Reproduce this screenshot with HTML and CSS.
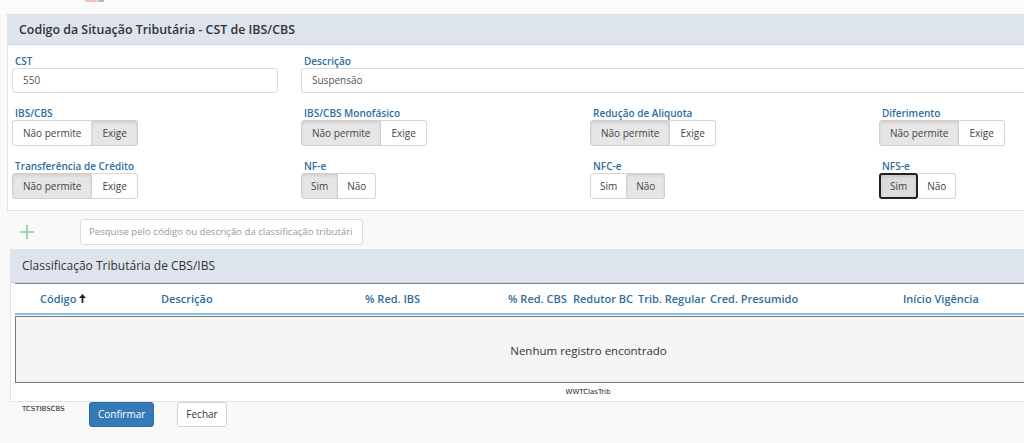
FILE: index.html
```html
<!DOCTYPE html>
<html lang="pt-BR">

<head>
    <meta charset="UTF-8">
    <title>CST de IBS/CBS</title>
    <link rel="stylesheet" href="styles.css">
</head>

<body>
    <div class="topbar">
        <span class="logo-red"></span><span class="logo-blue"></span>
    </div>

    <!-- Painel CST -->
    <div class="panel">
        <div class="panel-heading">Codigo da Situação Tributária - CST de IBS/CBS</div>
        <div class="panel-body">
            <div class="form-grid">
                <div class="field">
                    <label>CST</label>
                    <div class="input">550</div>
                </div>
                <div class="field span3">
                    <label>Descrição</label>
                    <div class="input">Suspensão</div>
                </div>

                <div class="field">
                    <label>IBS/CBS</label>
                    <div class="btn-group">
                        <span class="opt">Não permite</span><span class="opt active">Exige</span>
                    </div>
                </div>
                <div class="field">
                    <label>IBS/CBS Monofásico</label>
                    <div class="btn-group">
                        <span class="opt active">Não permite</span><span class="opt">Exige</span>
                    </div>
                </div>
                <div class="field">
                    <label>Redução de Aliquota</label>
                    <div class="btn-group">
                        <span class="opt active">Não permite</span><span class="opt">Exige</span>
                    </div>
                </div>
                <div class="field">
                    <label>Diferimento</label>
                    <div class="btn-group">
                        <span class="opt active">Não permite</span><span class="opt">Exige</span>
                    </div>
                </div>

                <div class="field">
                    <label>Transferência de Crédito</label>
                    <div class="btn-group">
                        <span class="opt active">Não permite</span><span class="opt">Exige</span>
                    </div>
                </div>
                <div class="field">
                    <label>NF-e</label>
                    <div class="btn-group">
                        <span class="opt short active">Sim</span><span class="opt short">Não</span>
                    </div>
                </div>
                <div class="field">
                    <label>NFC-e</label>
                    <div class="btn-group">
                        <span class="opt short">Sim</span><span class="opt short active">Não</span>
                    </div>
                </div>
                <div class="field">
                    <label>NFS-e</label>
                    <div class="btn-group">
                        <span class="opt short active focus">Sim</span><span class="opt short">Não</span>
                    </div>
                </div>
            </div>
        </div>
    </div>

    <div class="search-row">
        <svg class="plus" width="14" height="14" viewBox="0 0 14 14">
            <path d="M7 0v14M0 7h14" stroke="#82cfa0" stroke-width="1.6" fill="none" />
        </svg>
        <div class="search-input">Pesquise pelo código ou descrição da classificação tributári</div>
    </div>

    <!-- Painel Classificação -->
    <div class="panel panel-grid">
        <div class="panel-heading tall">Classificação Tributária de CBS/IBS</div>
        <div class="grid-body">
            <div class="grid-head">
                <span class="col c1">Código <svg width="7" height="9" viewBox="0 0 7 9">
                        <path d="M3.5 0L7 4H4.4V9H2.6V4H0Z" fill="#222" />
                    </svg></span>
                <span class="col c2">Descrição</span>
                <span class="col c3">% Red. IBS</span>
                <span class="col c4">% Red. CBS</span>
                <span class="col c5">Redutor BC</span>
                <span class="col c6">Trib. Regular</span>
                <span class="col c7">Cred. Presumido</span>
                <span class="col c8">Início Vigência</span>
            </div>
            <div class="grid-empty">Nenhum registro encontrado</div>
            <div class="grid-name">WWTClasTrib</div>
        </div>
    </div>

    <div class="actions">
        <span class="form-name">TCSTIBSCBS</span>
        <span class="btn btn-primary">Confirmar</span>
        <span class="btn btn-default">Fechar</span>
    </div>
</body>

</html>
```

FILE: styles.css
```css
body {
    margin: 0;
    background: #f9f9f9;
    font-family: 'Open Sans', Arial, sans-serif;
    color: #333;
    overflow: hidden;
    width: 1024px;
    height: 443px;
}

.topbar {
    height: 14px;
    background: #fcfbfb;
    padding-left: 85px;
}

.logo-red,
.logo-blue {
    display: inline-block;
    height: 2px;
    vertical-align: top;
}

.logo-red {
    width: 12px;
    background: #f7bfb6;
}

.logo-blue {
    width: 6px;
    margin-left: 1px;
    background: #9cc2e2;
}

.panel {
    margin-left: 7px;
    width: 1160px;
    background: #fff;
    border: 1px solid #e2e2e2;
}

.panel-heading {
    height: 29px;
    line-height: 29px;
    padding-left: 11px;
    background: #dde4ec;
    border-bottom: 1px solid #c3d5e7;
    font-size: 12.4px;
    font-weight: 600;
    color: #333;
}

.panel-body {
    padding: 8px 4px 11px;
}

.form-grid {
    display: grid;
    grid-template-columns: repeat(4, 266px);
    column-gap: 23px;
    row-gap: 12px;
}

.span3 {
    grid-column: span 3;
}

.field label {
    display: block;
    height: 14px;
    line-height: 16px;
    margin: 0 0 1px 3px;
    font-size: 10px;
    font-weight: 600;
    color: #2f6d9b;
}

.input {
    height: 23px;
    line-height: 23px;
    padding-left: 10px;
    border: 1px solid #dcdcdc;
    border-radius: 3px;
    font-size: 10px;
    color: #555;
}

.btn-group {
    display: flex;
    height: 26px;
}

.opt {
    box-sizing: border-box;
    height: 26px;
    line-height: 24px;
    padding: 0 10px;
    border: 1px solid #d6d6d6;
    font-size: 10px;
    color: #444;
    background: #fff;
}

.opt:first-child {
    border-radius: 3px 0 0 3px;
}

.opt:last-child {
    border-left: none;
    border-radius: 0 3px 3px 0;
}

.opt.short {
    padding: 0 9px;
}

.opt.active {
    background: #e6e6e6;
    box-shadow: inset 0 2px 3px rgba(0, 0, 0, 0.09);
    border-color: #cfcfcf;
}

.opt.focus {
    border: 2px solid #222;
    border-radius: 3px;
    background: #dcdcdc;
    line-height: 22px;
    padding: 0 9px;
}

.search-row {
    display: flex;
    align-items: center;
    height: 26px;
    padding: 8px 0 4px 20px;
}

.plus {
    margin-right: 46px;
}

.search-input {
    box-sizing: border-box;
    width: 283px;
    height: 26px;
    line-height: 24px;
    padding-left: 8px;
    border: 1px solid #dcdcdc;
    border-radius: 3px;
    background: #fff;
    font-size: 9.6px;
    color: #999;
    white-space: nowrap;
}

.panel-grid {
    margin-left: 10px;
    width: 1150px;
}

.panel-heading.tall {
    height: 32px;
    line-height: 31px;
    font-weight: 400;
    font-size: 12px;
}

.grid-body {
    padding: 0 0 0 4px;
}

.grid-head {
    display: flex;
    height: 29px;
    line-height: 30px;
    border-top: 1px solid #888;
    border-bottom: 2px solid #8dbde0;
    font-size: 11px;
    font-weight: 600;
    color: #2f6d9b;
    white-space: nowrap;
}

.col {
    flex: none;
}

.c1 {
    width: 121px;
    padding-left: 25px;
}

.c2 {
    width: 204px;
}

.c3 {
    width: 143px;
}

.c4,
.c5 {
    width: 65px;
}

.c6 {
    width: 72px;
}

.c7 {
    width: 193px;
}

.grid-empty {
    height: 65px;
    line-height: 68px;
    margin-top: 1px;
    border: 1px solid #777;
    border-right: none;
    background: #f5f5f5;
    text-align: center;
    font-size: 11.5px;
    color: #333;
}

.grid-name {
    height: 18px;
    line-height: 18px;
    text-align: center;
    font-family: 'DejaVu Sans', sans-serif;
    font-size: 7px;
    color: #222;
}

.actions {
    display: flex;
    align-items: flex-start;
    padding-left: 22px;
}

.form-name {
    font-family: 'DejaVu Sans', sans-serif;
    font-size: 7px;
    line-height: 14px;
    color: #222;
    width: 67px;
}

.btn {
    box-sizing: border-box;
    height: 25px;
    line-height: 23px;
    padding: 0 8px;
    border-radius: 3px;
    font-size: 10px;
}

.btn-primary {
    background: #337ab7;
    border: 1px solid #2e6da4;
    color: #fff;
}

.btn-default {
    margin-left: 23px;
    background: #fff;
    border: 1px solid #d2d2d2;
    color: #333;
}
```
